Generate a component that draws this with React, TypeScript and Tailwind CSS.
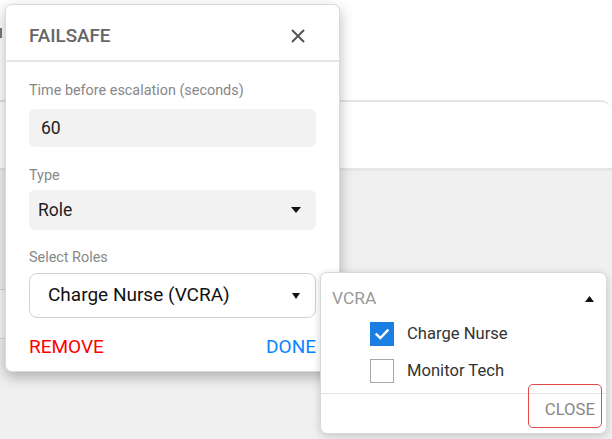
import React from "react";

function Caret({ up = false, className = "", w = 10 }: { up?: boolean; className?: string; w?: number }) {
  return (
    <svg width={w} height="6" viewBox="0 0 10 6" preserveAspectRatio="none" className={className}>
      {up ? <path d="M0 6 L5 0 L10 6 Z" fill="#111" /> : <path d="M0 0 L10 0 L5 6 Z" fill="#111" />}
    </svg>
  );
}

function CheckBox({ checked }: { checked: boolean }) {
  return checked ? (
    <div className="w-[24px] h-[24px] bg-[#1a7ee3] flex items-center justify-center">
      <svg width="16" height="16" viewBox="0 0 16 16">
        <path d="M2.5 8.5 L6.3 12 L13.5 4.5" stroke="#fff" strokeWidth="2.4" fill="none" strokeLinecap="square" />
      </svg>
    </div>
  ) : (
    <div className="w-[24px] h-[24px] border-[1.5px] border-[#a8a8a8] bg-white" />
  );
}

export default function App() {
  return (
    <div
      className="relative w-[612px] h-[439px] overflow-hidden bg-white"
      style={{ fontFamily: "Roboto, 'Liberation Sans', sans-serif" }}
    >
      {/* background page */}
      <div className="flex flex-col h-full">
        <div className="h-[100px] bg-white pt-[28px]">
          <div className="w-[2px] h-[10px] bg-[#777]" />
        </div>
        <div className="h-[68px] bg-white border-t-[2px] border-[#e4e4e4] rounded-tr-[10px] mr-[1px]" />
        <div className="flex-1 bg-[#f0f0f0] border-t-[3px] border-[#e6e6e6] flex flex-col">
          <div className="h-[118px]" />
          <div className="h-[50px] w-[330px] bg-[#f8f8f8] border-y border-[#d8d8d8]" />
        </div>
      </div>

      {/* Failsafe dialog */}
      <div className="absolute left-[5px] top-[4px] w-[335px] h-[368px] bg-white rounded-[7px] border border-[#dadada] shadow-[0_5px_14px_rgba(0,0,0,0.28)] flex flex-col">
        <div className="h-[57px] flex items-center justify-between pl-[23px] pr-[34px] pt-[7px] border-b-[2px] border-[#e6e6e6]">
          <span className="text-[18.8px] font-medium text-[#666]">FAILSAFE</span>
          <svg width="14" height="14" viewBox="0 0 14 14">
            <path d="M1 1 L13 13 M13 1 L1 13" stroke="#555" strokeWidth="2" />
          </svg>
        </div>
        <div className="flex flex-col px-[23px] pt-[20px]">
          <div className="text-[14.4px] leading-[17px] text-[#888]">Time before escalation (seconds)</div>
          <div className="mt-[10px] h-[38px] rounded-[6px] bg-[#f2f2f2] flex items-center px-[12px] text-[17.5px] text-[#222]">
            60
          </div>
          <div className="mt-[20px] text-[14.4px] leading-[17px] text-[#888]">Type</div>
          <div className="mt-[6px] h-[40px] rounded-[6px] bg-[#f2f2f2] flex items-center justify-between pl-[9px] pr-[15px] text-[17.5px] text-[#222]">
            <span>Role</span>
            <Caret />
          </div>
          <div className="mt-[19px] text-[14.4px] leading-[17px] text-[#888]">Select Roles</div>
          <div className="mt-[7px] h-[45px] rounded-[8px] border border-[#d0d0d0] bg-white flex items-center justify-between pl-[18px] pr-[15px] text-[19px] text-[#111]">
            <span>Charge Nurse (VCRA)</span>
            <Caret w={8} />
          </div>
          <div className="mt-[18px] flex items-center justify-between text-[19px] leading-[22px]">
            <span className="text-[#ff0000]">REMOVE</span>
            <span className="text-[#0a84ff]">DONE</span>
          </div>
        </div>
      </div>

      {/* Roles dropdown */}
      <div className="absolute left-[320px] top-[272px] w-[287px] h-[162px] bg-white rounded-[7px] border border-[#d8d8d8] shadow-[0_2px_8px_rgba(0,0,0,0.18)] flex flex-col">
        <div className="h-[47px] flex items-center justify-between pl-[11px] pr-[12px] pt-[4px]">
          <span className="text-[17.4px] text-[#999]">VCRA</span>
          <Caret up w={9} />
        </div>
        <div className="flex flex-col gap-[12px] pl-[49px] pt-[2px]">
          <div className="flex items-center gap-[13px]">
            <CheckBox checked />
            <span className="text-[16.6px] text-[#333]">Charge Nurse</span>
          </div>
          <div className="flex items-center gap-[13px]">
            <CheckBox checked={false} />
            <span className="text-[16.6px] text-[#333]">Monitor Tech</span>
          </div>
        </div>
        <div className="mt-[9px] border-t border-[#e2e2e2] flex-1 flex justify-end items-start pr-[4px]">
          <div className="relative -mt-[10px] w-[74px] h-[44px] rounded-[5px] border-[1.5px] border-[#e54848] flex items-end justify-end pr-[6px] pb-[5px]">
            <span className="text-[16.7px] text-[#888]">CLOSE</span>
          </div>
        </div>
      </div>
    </div>
  );
}
